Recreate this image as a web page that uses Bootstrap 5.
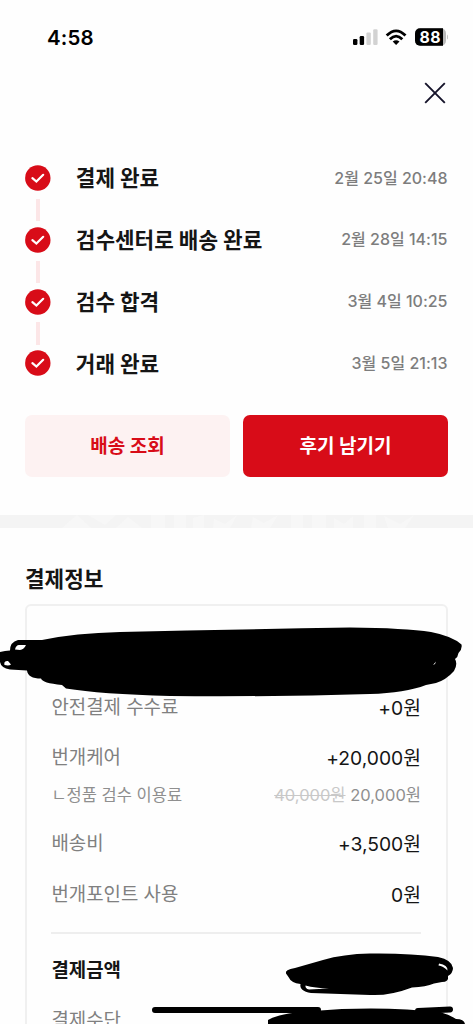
<!DOCTYPE html>
<html lang="ko">
<head>
<meta charset="utf-8">
<meta name="viewport" content="width=device-width, initial-scale=1">
<title>거래 완료</title>
<link rel="stylesheet" href="https://cdn.jsdelivr.net/npm/bootstrap@5.3.0/dist/css/bootstrap.min.css">
<style>
body{font-family:Inter,"Noto Sans CJK KR",sans-serif;color:#151515;background:#fefefe;line-height:1}
.screen{height:1024px;overflow:hidden}
.statusbar{height:74px;padding:0 25px 0 47px}
.clock{font-size:20.5px;font-weight:600;letter-spacing:.1px;color:#000;padding-top:2px}
.topbar{height:38px;padding-right:27px}
.close-btn{width:22px;height:22px}
.timeline{margin-top:35.2px}
.step{height:61.75px;padding:0 25.5px 0 25px}
.step-rail{width:26px;height:61.75px}
.step-rail::after{content:"";position:absolute;left:10.7px;top:51.8px;width:4px;height:22.5px;background:#fce6e7}
.step:last-child .step-rail::after{display:none}
.step-name{font-size:21.3px;font-weight:700;margin-left:24.8px;padding-top:2px}
.step-date{font-size:16px;font-weight:500;color:#7d7d7d;margin-top:-1px}
.actions{margin-top:20.4px;padding:0 25px;gap:13px}
.actions .btn{height:62.5px;border:0;border-radius:7px;font-size:19px;font-weight:700;padding:3px 0 0}
.btn-track{background:#fdf2f2;color:#d80c18}
.btn-review{background:#d80c18;color:#fff}
.band{height:13px;margin-top:38px;background:#f4f4f4}
.pay-title{font-size:21.3px;font-weight:700;height:76px;padding:39px 0 0 25px}
.pay-card{margin:0 25px;border:2px solid #f0f0f0;border-radius:6px;height:470px;padding:0 25px 0 24.4px}
.pay-row{height:50.5px;font-size:18.9px}
.pay-row>:first-child{color:#808080}
.pay-row>:nth-child(2){font-size:19.3px}
.pay-first{margin-top:77px}
.pay-sub{height:22px;font-size:16.5px;color:#8f8f8f}
.pay-sub s{color:#c8c8c8}
.pay-ship{margin-top:13.5px}
.total{height:80px;border-top:2px solid #eee;margin-top:11px;padding-bottom:2px}
.total>:first-child{color:#151515;font-weight:700}
.ink{left:-27px;top:-2px}
</style>
</head>
<body>
<div class="screen">
  <header>
    <div class="statusbar d-flex justify-content-between align-items-center">
      <span class="clock">4:58</span>
      <svg width="98" height="20" viewBox="350 27 98 20">
        <g><rect x="353" y="39" width="4.4" height="6" rx="1.2"/><rect x="359.7" y="36" width="4.4" height="9" rx="1.2"/><g fill="#d2d2d2"><rect x="366.4" y="32.4" width="4.4" height="12.6" rx="1.2"/><rect x="373.2" y="29.3" width="4.4" height="15.7" rx="1.2"/></g></g>
        <g fill="none" stroke="#000" stroke-width="2.8"><path d="M386.7 35.6Q396.1 26 405.5 35.6"/><path d="M389.9 39.2Q396.1 32.9 402.3 39.2"/></g>
        <path d="M392.7 41.6Q396.1 38.8 399.5 41.6L396.1 45.1Z"/>
        <rect x="415" y="28.3" width="31" height="17.4" rx="5" fill="#bababa"/>
        <path d="M443 28.3H420a5 5 0 0 0-5 5v7.4a5 5 0 0 0 5 5h23z"/>
        <path d="M447.2 34.5q2.5 2.5 0 5z" fill="#bababa"/>
        <text x="419.6" y="42.8" font-family="Inter,sans-serif" font-size="15.8" font-weight="700" fill="#fff" textLength="21">88</text>
      </svg>
    </div>
    <div class="topbar d-flex justify-content-end align-items-center">
      <svg class="close-btn" viewBox="0 0 22 22" role="button" aria-label="닫기"><path d="M1.2 1.2 20.8 20.8M20.8 1.2 1.2 20.8" stroke="#15132a" stroke-width="1.9"/></svg>
    </div>
  </header>
  <section class="timeline">
    <div class="step d-flex align-items-center"><div class="step-rail position-relative d-flex align-items-center"><svg width="26" height="26" viewBox="0 0 26 26"><circle cx="12.8" cy="13" r="12.7" fill="#d80c18"/><path d="M7.4 13.2 11.4 16.6 18.2 9.8" fill="none" stroke="#fff" stroke-width="2.2" stroke-linecap="round"/></svg></div><span class="step-name">결제 완료</span><span class="step-date ms-auto">2월 25일 20:48</span></div>
    <div class="step d-flex align-items-center"><div class="step-rail position-relative d-flex align-items-center"><svg width="26" height="26" viewBox="0 0 26 26"><circle cx="12.8" cy="13" r="12.7" fill="#d80c18"/><path d="M7.4 13.2 11.4 16.6 18.2 9.8" fill="none" stroke="#fff" stroke-width="2.2" stroke-linecap="round"/></svg></div><span class="step-name">검수센터로 배송 완료</span><span class="step-date ms-auto">2월 28일 14:15</span></div>
    <div class="step d-flex align-items-center"><div class="step-rail position-relative d-flex align-items-center"><svg width="26" height="26" viewBox="0 0 26 26"><circle cx="12.8" cy="13" r="12.7" fill="#d80c18"/><path d="M7.4 13.2 11.4 16.6 18.2 9.8" fill="none" stroke="#fff" stroke-width="2.2" stroke-linecap="round"/></svg></div><span class="step-name">검수 합격</span><span class="step-date ms-auto">3월 4일 10:25</span></div>
    <div class="step d-flex align-items-center"><div class="step-rail position-relative d-flex align-items-center"><svg width="26" height="26" viewBox="0 0 26 26"><circle cx="12.8" cy="13" r="12.7" fill="#d80c18"/><path d="M7.4 13.2 11.4 16.6 18.2 9.8" fill="none" stroke="#fff" stroke-width="2.2" stroke-linecap="round"/></svg></div><span class="step-name">거래 완료</span><span class="step-date ms-auto">3월 5일 21:13</span></div>
  </section>
  <div class="actions d-flex">
    <button class="btn btn-track flex-fill w-50">배송 조회</button>
    <button class="btn btn-review flex-fill w-50">후기 남기기</button>
  </div>
  <div class="band">
    <svg class="d-block" width="473" height="13" fill="#f7f7f7"><path d="M62 13 72 4 77 0 91 13ZM88 0H116L105 10ZM116 13 128 2 142 13ZM151 0H165V13H151ZM174 0H186V13H174ZM193 3 204 0V13H193ZM214 4 225 9 237 0 230 13H213ZM253 2 264 8 278 0 270 13H251ZM291 0H303V13H291ZM312 0H326V13H312ZM334 3 344 9 353 1V13H334ZM364 0H376V13H364ZM384 1 400 9 414 0 405 13H388Z"/></svg>
  </div>
  <section>
    <h1 class="pay-title m-0">결제정보</h1>
    <div class="pay-card position-relative">
      <div class="pay-row pay-first d-flex justify-content-between align-items-center"><span>안전결제 수수료</span><span>+0원</span></div>
      <div class="pay-row d-flex justify-content-between align-items-center"><span>번개케어</span><span>+20,000원</span></div>
      <div class="pay-sub d-flex justify-content-between align-items-center"><span>ㄴ정품 검수 이용료</span><span><s>40,000원</s> 20,000원</span></div>
      <div class="pay-row pay-ship d-flex justify-content-between align-items-center"><span>배송비</span><span>+3,500원</span></div>
      <div class="pay-row d-flex justify-content-between align-items-center"><span>번개포인트 사용</span><span>0원</span></div>
      <div class="pay-row total d-flex align-items-center"><span>결제금액</span></div>
      <div class="pay-row d-flex align-items-start"><span>결제수단</span></div>
      <svg class="ink position-absolute" width="473" height="420" viewBox="0 604 473 420">
        <path fill-rule="evenodd" d="M42 640Q75 633 120 632Q230 629.5 350 627.5Q405 628 431 632Q452 636 461.5 644.5Q462.5 649 458.5 653Q458 657 455 659Q458 664 454 671Q446 680 436 683L426 685Q405 693 370 694Q270 697 170 696Q100 694 66 688.5L62 685Q42 683 41 678.5Q28 678.5 27 670.5L10 669.5Q1 668 0 662V652Q5 650.5 10 650.5Q10 642 18 640ZM15 649.5Q16 645 19 645H26Q24 649.5 20 650ZM4.5 665Q3.5 660.5 8 661L11 664.5Q9 666 4.5 665ZM433 665 436 661.5 435 664Z"/>
        <path fill-rule="evenodd" d="M286 973.5Q284.5 969.5 295 968L323 960Q343 954 370 953.5Q410 953 438 957Q452 960 453 968Q453 973 448 976Q449 982 442 982L434 983.5Q426 987 412 987.5Q390 996 370 995L311 993Q299 991 300.5 984Q291 983 288.5 977ZM439 963.5Q448 965 447.5 970.5Q443 966 438.5 965.5ZM305.5 985.5Q315 988 329 988.5L309 989.5Q305 988.5 305.5 985.5Z"/>
        <path d="M155 1010H318M418 1011 450 1009.5" fill="none" stroke="#000" stroke-width="6" stroke-linecap="round"/>
        <path d="M268 1024V1020Q280 1013 313 1011Q360 1007 407 1009.5L440 1012Q450 1015 456 1019Q464 1019 465 1024Z"/>
      </svg>
    </div>
  </section>
</div>
<script src="https://cdn.jsdelivr.net/npm/bootstrap@5.3.0/dist/js/bootstrap.bundle.min.js"></script>
</body>
</html>
